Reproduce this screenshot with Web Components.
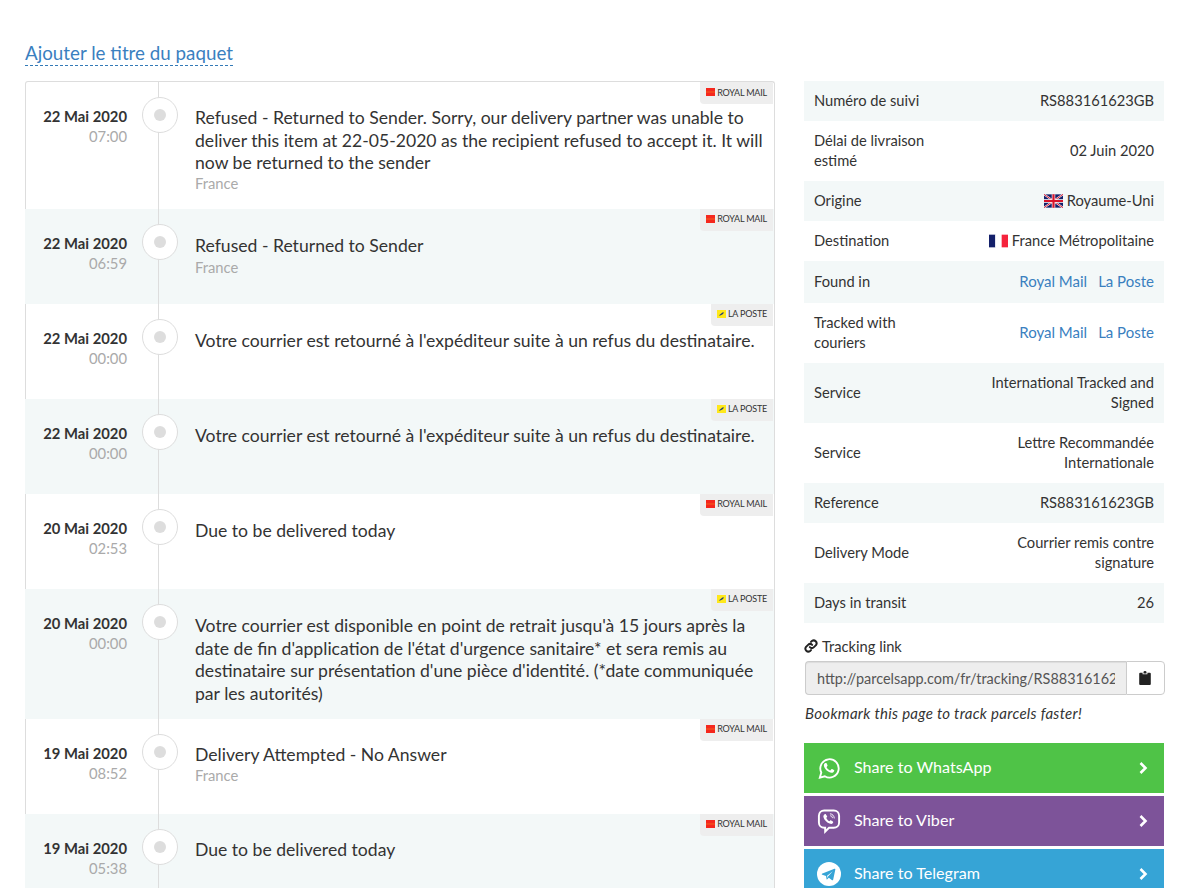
<!DOCTYPE html>
<html lang="fr"><head><meta charset="utf-8"><title>Suivi</title>
<style>
html,body{margin:0;padding:0;height:888px;overflow:hidden;background:#fff}
body{font-family:Lato,"Noto Sans",sans-serif;color:#333;font-size:15px}
</style></head><body>
<parcel-page>
  <parcel-title slot="title">Ajouter le titre du paquet</parcel-title>
  <timeline-list slot="main">
    <timeline-event date="22 Mai 2020" time="07:00" carrier="rm" place="France">Refused - Returned to Sender. Sorry, our delivery partner was unable to deliver this item at 22-05-2020 as the recipient refused to accept it. It will now be returned to the sender</timeline-event>
    <timeline-event date="22 Mai 2020" time="06:59" carrier="rm" place="France">Refused - Returned to Sender</timeline-event>
    <timeline-event date="22 Mai 2020" time="00:00" carrier="lp">Votre courrier est retourné à l'expéditeur suite à un refus du destinataire.</timeline-event>
    <timeline-event date="22 Mai 2020" time="00:00" carrier="lp">Votre courrier est retourné à l'expéditeur suite à un refus du destinataire.</timeline-event>
    <timeline-event date="20 Mai 2020" time="02:53" carrier="rm">Due to be delivered today</timeline-event>
    <timeline-event date="20 Mai 2020" time="00:00" carrier="lp">Votre courrier est disponible en point de retrait jusqu'à 15 jours après la date de fin d'application de l'état d'urgence sanitaire* et sera remis au destinataire sur présentation d'une pièce d'identité. (*date communiquée par les autorités)</timeline-event>
    <timeline-event date="19 Mai 2020" time="08:52" carrier="rm" place="France">Delivery Attempted - No Answer</timeline-event>
    <timeline-event date="19 Mai 2020" time="05:38" carrier="rm">Due to be delivered today</timeline-event>
  </timeline-list>
  <info-table slot="side">
    <info-row label="Numéro de suivi">RS883161623GB</info-row>
    <info-row label="Délai de livraison estimé">02 Juin 2020</info-row>
    <info-row label="Origine"><country-flag code="gb"></country-flag>Royaume-Uni</info-row>
    <info-row label="Destination"><country-flag code="fr"></country-flag>France Métropolitaine</info-row>
    <info-row label="Found in" tall><carrier-link>Royal Mail</carrier-link><carrier-link>La Poste</carrier-link></info-row>
    <info-row label="Tracked with couriers"><carrier-link>Royal Mail</carrier-link><carrier-link>La Poste</carrier-link></info-row>
    <info-row label="Service">International Tracked and Signed</info-row>
    <info-row label="Service">Lettre Recommandée Internationale</info-row>
    <info-row label="Reference">RS883161623GB</info-row>
    <info-row label="Delivery Mode">Courrier remis contre signature</info-row>
    <info-row label="Days in transit">26</info-row>
  </info-table>
  <tracking-link slot="side" url="http://parcelsapp.com/fr/tracking/RS883161623GB"></tracking-link>
  <share-button slot="side" net="whatsapp" color="#4fc347" first>Share to WhatsApp</share-button>
  <share-button slot="side" net="viber" color="#7d5399">Share to Viber</share-button>
  <share-button slot="side" net="telegram" color="#36a4d6">Share to Telegram</share-button>
</parcel-page>
<script>
function def(name, css, html){
  customElements.define(name, class extends HTMLElement{
    constructor(){super();this.attachShadow({mode:'open'});}
    connectedCallback(){
      const h = typeof html==='function'?html(this):html;
      this.shadowRoot.innerHTML='<style>'+css+'</style>'+h;
    }
  });
}
def('parcel-page',`:host{display:block;padding:40px 20px 0 25px}
.cols{display:flex;gap:29px;align-items:flex-start;margin-top:15px}
.main{width:750px;flex:none}.side{width:360px;flex:none;display:flex;flex-direction:column}`,
`<slot name="title"></slot><div class="cols"><div class="main"><slot name="main"></slot></div><div class="side"><slot name="side"></slot></div></div>`);
def('parcel-title',`:host{display:block;line-height:25px;font-size:18.8px;color:#3a80bf}
span{display:inline-block;border-bottom:1px dashed #337ab7}`,`<span><slot></slot></span>`);
def('timeline-list',`:host{display:block;border:1px solid #ddd;border-bottom:0;border-radius:3px 3px 0 0}`,`<slot></slot>`);
const badges={
 rm:{label:'ROYAL MAIL',icon:`<svg width="9" height="8" viewBox="0 0 10 8" preserveAspectRatio="none"><rect width="10" height="8" fill="#f5271d"/><rect y="3.500" width="10" height="1" fill="#f2601e"/></svg>`},
 lp:{label:'LA POSTE',icon:`<svg width="9" height="8" viewBox="0 0 10 8" preserveAspectRatio="none"><rect width="10" height="8" fill="#ffe81a"/><path d="M2 5.500 6 2.500 8 2.500 6 4.500 3.500 5.500Z" fill="#1f3d78"/></svg>`}
};
def('carrier-badge',`:host{position:absolute;top:0;right:1px;display:flex;align-items:center;height:22px;padding:0 6px 2px 6px;box-sizing:border-box;background:#eee;border-radius:0 0 0 4px;font-size:9px;color:#333;letter-spacing:-.2px}
svg{display:block;margin-right:2px}`,
 el=>{const b=badges[el.getAttribute('code')];return b.icon+'<span>'+b.label+'</span>';});
def('timeline-event',`:host{display:block;position:relative;margin-left:-1px;background:transparent;min-height:95px;box-sizing:border-box}
:host(:nth-child(even)){background:#f3f8f8}
.row{display:grid;grid-template-columns:102px 68px 1fr;min-height:95px;box-sizing:border-box;padding:0 8px 0 0;position:relative}
.line{position:absolute;left:133px;top:0;bottom:0;width:1px;background:#ddd}
.when{text-align:right;padding-top:24px;line-height:20px;}
.d{font-weight:700;font-size:14.8px;color:#333}.t{color:#aaa;font-size:14.8px}
.mid{position:relative}
.dot{position:absolute;left:15px;top:15px;width:36px;height:36px;box-sizing:border-box;border:1px solid #ddd;border-radius:50%;background:#fff;display:flex;align-items:center;justify-content:center}
.dot i{display:block;width:12px;height:12px;border-radius:50%;background:#ddd;margin-left:-1px;}
.txt{padding:26px 0 13.36px 0;font-size:17.6px;line-height:22.66px;color:#333}
.p{font-size:14.8px;color:#aaa;line-height:20px;margin-top:-1px}
:host(:first-child) .txt{padding:25px 0 16.02px}
:host(:first-child) .p{margin-top:-2px}
:host(:nth-child(n+7)) .txt{padding-top:25px}
:host(:nth-child(n+7)) .p{margin-top:-2px}
`,el=>{const p=el.getAttribute('place');return `<div class="row"><div class="line"></div><div class="when"><div class="d">${el.getAttribute('date')}</div><div class="t">${el.getAttribute('time')}</div></div><div class="mid"><div class="dot"><i></i></div></div><div class="txt"><div><slot></slot></div>${p?`<div class="p">${p}</div>`:''}</div><carrier-badge code="${el.getAttribute('carrier')}"></carrier-badge></div>`;});
def('info-table',`:host{display:block;font-size:14.7px;line-height:20px}`,`<slot></slot>`);
def('info-row',`:host{display:flex;justify-content:space-between;align-items:center;box-sizing:border-box;min-height:40px;padding:9px 10px 11px;gap:16px;background:#fff}
:host(:nth-child(odd)){background:#f3f8f8}
:host([tall]){min-height:42px}
.l{flex:0 0 130px}.v{flex:1;text-align:right}`,
 el=>`<div class="l">${el.getAttribute('label')}</div><div class="v"><slot></slot></div>`);
def('country-flag',`:host{display:inline-block;vertical-align:-2px;margin-right:4px;line-height:0}`,
 el=>el.getAttribute('code')==='gb'
 ?`<svg width="19" height="14" viewBox="0 0 60 42"><rect width="60" height="42" fill="#14206a"/><path d="M0 0 60 42M60 0 0 42" stroke="#fff" stroke-width="6"/><path d="M0 0 60 42M60 0 0 42" stroke="#d8142b" stroke-width="3"/><path d="M30 0V42M0 21H60" stroke="#fff" stroke-width="11"/><path d="M30 0V42M0 21H60" stroke="#d8142b" stroke-width="7"/></svg>`
 :`<svg width="19" height="14" viewBox="0 0 3 2"><rect width="1" height="2" fill="#14206a"/><rect x="1" width="1" height="2" fill="#fff"/><rect x="2" width="1" height="2" fill="#f5233c"/></svg>`);
def('carrier-link',`:host{display:inline;color:#3a80bf;margin-left:11px;font-size:15px}`,`<slot></slot>`);
def('tracking-link',`:host{display:block;font-size:14.7px;line-height:20px;margin-top:13px}
.lab{display:flex;align-items:center;gap:4px;height:20px}
svg{display:block}
.grp{display:flex;height:34px;margin:5px 0 0 1px;box-sizing:border-box;width:360px}
input{flex:1;min-width:0;box-sizing:border-box;height:34px;border:1px solid #ccc;border-right:0;border-radius:4px 0 0 4px;background:#eee;color:#555;font:inherit;font-size:14.45px;padding:0 11px;box-shadow:inset 0 1px 1px rgba(0,0,0,.075);outline:0}
.btn{flex:0 0 39px;box-sizing:border-box;border:1px solid #ccc;border-radius:0 4px 4px 0;background:#fff;display:flex;align-items:center;justify-content:center}
.btn svg{margin-right:2px}
em{display:block;margin:8px 0 0 1px;font-size:15px;letter-spacing:.3px}`,
 el=>`<div class="lab"><svg width="14" height="14" viewBox="0 0 24 24" fill="none" stroke="#222" stroke-width="3.400" stroke-linecap="round"><path d="M10 14a5 5 0 0 0 7 0l3.500-3.500a5 5 0 0 0-7-7L12 5"/><path d="M14 10a5 5 0 0 0-7 0l-3.500 3.500a5 5 0 0 0 7 7L12 19"/></svg><span>Tracking link</span></div>
 <div class="grp"><input readonly value="${el.getAttribute('url')}"><div class="btn"><svg width="12" height="14" viewBox="0 0 12 14"><path fill="#222" d="M1.200 1.800H3.600V3.200H8.400V1.800H10.800a1 1 0 0 1 1 1V13a1 1 0 0 1-1 1H1.200a1 1 0 0 1-1-1V2.800a1 1 0 0 1 1-1ZM4.500 1.200a1.500 1.200 0 0 1 3 0V2.400H4.500Z"/></svg></div></div>
 <em>Bookmark this page to track parcels faster!</em>`);
const nets={
 whatsapp:`<svg width="22" height="22" viewBox="0 0 24 24"><path fill="none" stroke="#fff" stroke-width="2" d="M2 22.500l1.600-5.600A10 10 0 1 1 7.400 21Z"/><path fill="#fff" d="M8.600 6.500c.3 0 .7 0 .9.500l.9 2.100c.1.300 0 .6-.2.800l-.7.900c-.2.200-.2.400 0 .7.900 1.500 2 2.400 3.500 3.100.3.100.5.100.7-.1l.9-1.100c.2-.3.500-.3.800-.2l2 1c.4.200.4.400.3.800-.2 1.400-1.500 2.200-2.800 2.200-3.500-.2-8.200-4.200-8.500-8 0-1.300.9-2.700 1.700-2.700Z"/></svg>`,
 viber:`<svg width="24" height="25" viewBox="0 0 24 26"><path fill="none" stroke="#fff" stroke-width="2" d="M7 1.500h10c3 0 5.500 2.300 5.500 5.500v7c0 3.200-2.500 5.500-5.500 5.500h-5L8 23.500v-4H7c-3 0-5.500-2.300-5.500-5.500V7C1.500 3.800 4 1.500 7 1.500Z"/><path fill="#fff" d="M7.500 5.500c.5-.3 1-.3 1.300.2l1.200 1.800c.2.400.2.800-.2 1.100l-.7.600c.5 1.600 1.800 3 3.400 3.600l.7-.8c.3-.3.700-.4 1.100-.1l1.700 1.200c.4.300.5.800.2 1.200-.7 1.100-1.800 1.500-2.900 1.100C9.500 14.200 7 11.600 6.200 8.400c-.2-1.200.3-2.200 1.300-2.900Z"/><path fill="none" stroke="#fff" stroke-width="1" d="M13 5c2.600.2 4.300 2 4.500 4.800M13.300 7c1.400.2 2.200 1 2.300 2.500"/></svg>`,
 telegram:`<svg width="24" height="24" viewBox="0 0 25 25"><circle cx="12.500" cy="12.500" r="12.500" fill="#fff"/><path fill="#36a4d6" d="M5 12.300 18.200 7c.6-.2 1.100.1.900.9l-2.200 10.400c-.2.800-.6 1-1.200.6l-3.400-2.500-1.600 1.600c-.3.300-.6.300-.7-.1l-.6-3.400-3.900-1.200c-.7-.2-.7-.7-.1-1Z"/><path fill="#fff" d="M10.500 14.200 16.500 9.600 11.500 15.200 11.200 17Z"/></svg>`
};
def('share-button',`:host{display:flex;align-items:center;height:50px;margin-top:3px;padding-left:13px;padding-right:15px;box-sizing:border-box;color:#fff;font-size:16.1px;width:360px}
.ic{flex:0 0 24px;display:flex;justify-content:center}
.tx{flex:1;margin-left:13px;padding-bottom:4px}
:host([first]){margin-top:20px}`,
 el=>`<style>:host{background:${el.getAttribute('color')}}</style><div class="ic">${nets[el.getAttribute('net')]}</div><div class="tx"><slot></slot></div><svg width="12" height="14" viewBox="0 0 12 14" fill="none" stroke="#fff" stroke-width="2.600"><path d="M3.500 2 8.500 7 3.500 12"/></svg>`);
</script>
</body></html>
